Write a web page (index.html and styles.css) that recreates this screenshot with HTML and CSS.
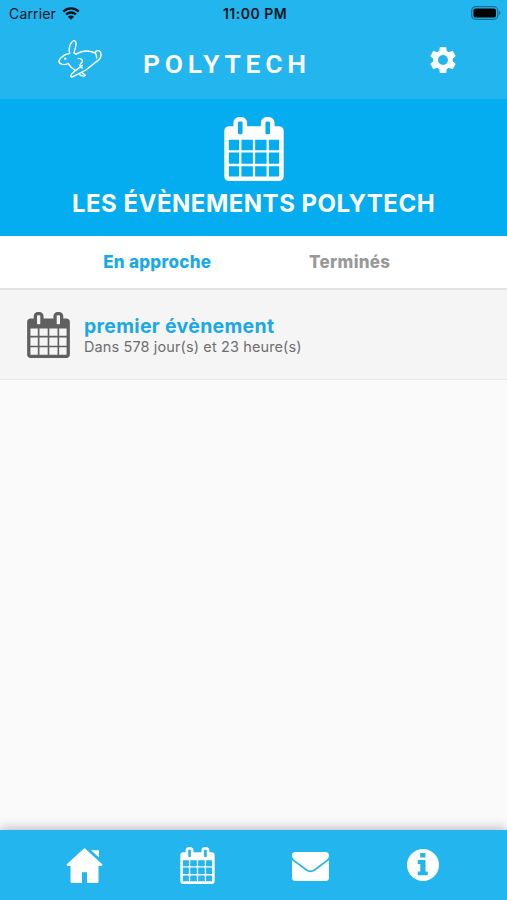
FILE: index.html
```html
<!DOCTYPE html>
<html lang="fr">
<head>
    <meta charset="UTF-8">
    <meta name="viewport" content="width=device-width, initial-scale=1.0">
    <title>Polytech</title>
    <link rel="stylesheet" href="styles.css">
</head>
<body>

<svg width="0" height="0" class="sprites">
    <symbol id="calendar" viewBox="64 0 1664 1792">
        <path d="M192 1664h288v-288h-288v288zm352 0h320v-288h-320v288zm-352-352h288v-320h-288v320zm352 0h320v-320h-320v320zm-352-384h288v-288h-288v288zm736 736h320v-288h-320v288zm-384-736h320v-288h-320v288zm768 736h288v-288h-288v288zm-384-352h320v-320h-320v320zm-352-864v-288q0-13-9.500-22.500t-22.500-9.500h-64q-13 0-22.500 9.500t-9.500 22.500v288q0 13 9.500 22.500t22.500 9.500h64q13 0 22.500-9.500t9.500-22.500zm736 864h288v-320h-288v320zm-384-384h320v-288h-320v288zm384 0h288v-288h-288v288zm32-480v-288q0-13-9.500-22.500t-22.500-9.500h-64q-13 0-22.500 9.500t-9.500 22.500v288q0 13 9.500 22.500t22.500 9.500h64q13 0 22.500-9.500t9.500-22.500zm384-64v1280q0 52-38 90t-90 38h-1408q-52 0-90-38t-38-90v-1280q0-52 38-90t90-38h128v-96q0-66 47-113t113-47h64q66 0 113 47t47 113v96h384v-96q0-66 47-113t113-47h64q66 0 113 47t47 113v96h128q52 0 90 38t38 90z"/>
    </symbol>
</svg>

<div class="app">
    <header class="header">
        <div class="status">
            <div class="carrier">
                <span>Carrier</span>
                <svg class="wifi" viewBox="0 0 18 13">
                    <path d="M1.300 4.600a11 11 0 0 1 15.400 0M4.100 7.500a7 7 0 0 1 9.800 0" fill="none" stroke="#06141b" stroke-width="2.300"/>
                    <path d="M9 12.800L5.900 9.700a4.400 4.400 0 0 1 6.200 0z"/>
                </svg>
            </div>
            <span class="time">11:00 PM</span>
            <div class="battery-box">
                <svg class="battery" viewBox="0 0 30 14">
                    <rect x="0.700" y="0.700" width="26" height="12.600" rx="3.800" fill="none" stroke="#166f94" stroke-width="1.200"/>
                    <rect x="2.400" y="2.400" width="22.600" height="9.200" rx="2.200" fill="#000"/>
                    <path d="M27.900 4.800q3 2.200 0 4.400z" fill="#166f94"/>
                </svg>
            </div>
        </div>
        <div class="nav">
            <svg class="rabbit" viewBox="0 0 132 114">
                <path d="M35 41C31 24 37 8 45 3c5-3 9 1 9 8 0 10-3 18-6 27l5 5c10-6 18-9 29-10 12-1 21 2 30 6 0-5 4-8 9-7 6 1 8 6 8 12 0 10-6 16-14 21L84 90l-39 20c-3 2-7 1-7-2 0-4 5-8 9-12 2-2 3-4 3-7-9-4-15-10-19-19-7 4-13 6-20 2C3 70 2 66 3 62c2-6 8-11 14-15 5-4 12-6 18-6z"/>
                <path d="M112 39c3 4 4 9 4 15M60 55c12 0 16 7 11 13-3 4-6 6-5 10 1 3 4 4 7 6M47 96l26-20M72 98l10 8c-4 4-11 2-17-2"/>
                <circle cx="22" cy="56" r="1.500"/>
            </svg>
            <h1 class="title">POLYTECH</h1>
            <svg class="gear" viewBox="2 2 20 20">
                <path d="M19.430 12.980c.04-.32.07-.64.07-.98s-.03-.66-.07-.98l2.110-1.650c.19-.15.24-.42.12-.64l-2-3.460c-.12-.22-.39-.3-.61-.22l-2.490 1c-.52-.4-1.080-.73-1.690-.98l-.38-2.650C14.460 2.180 14.250 2 14 2h-4c-.25 0-.46.18-.49.42l-.38 2.650c-.61.25-1.170.59-1.690.98l-2.490-1c-.23-.09-.49 0-.61.22l-2 3.460c-.13.22-.07.49.12.64l2.110 1.650c-.04.32-.07.65-.07.98s.03.66.07.98l-2.110 1.650c-.19.15-.24.42-.12.64l2 3.460c.12.22.39.3.61.22l2.490-1c.52.4 1.080.73 1.690.98l.38 2.650c.03.24.24.42.49.42h4c.25 0 .46-.18.49-.42l.38-2.650c.61-.25 1.170-.59 1.690-.98l2.490 1c.23.09.49 0 .61-.22l2-3.460c.12-.22.07-.49-.12-.64l-2.110-1.650zM12 15.800c-2.100 0-3.800-1.700-3.800-3.800s1.700-3.800 3.800-3.800 3.800 1.700 3.800 3.800-1.700 3.800-3.800 3.800z"/>
            </svg>
        </div>
    </header>

    <section class="banner">
        <svg class="banner-icon"><use href="#calendar"/></svg>
        <h2>LES ÉVÈNEMENTS POLYTECH</h2>
    </section>

    <div class="tabs">
        <span class="tab active">En approche</span>
        <span class="tab">Terminés</span>
    </div>

    <main class="list">
        <div class="event">
            <svg class="event-icon"><use href="#calendar"/></svg>
            <div class="event-text">
                <h3>premier évènement</h3>
                <p>Dans 578 jour(s) et 23 heure(s)</p>
            </div>
        </div>
    </main>

    <footer class="footer">
        <div class="item">
            <svg class="home" viewBox="0 0 36 35">
                <path d="M18 0L36 16.500q.2 1.300-1.500 1.500H32v15.500q0 1.500-1.500 1.500H20.500V24.300h-5V35H5.500Q4 35 4 33.500V18H1.500Q-.2 17.800 0 16.500z"/>
                <path d="M24.500 2.200H32.500V9.600z"/>
            </svg>
        </div>
        <div class="item">
            <svg class="cal"><use href="#calendar"/></svg>
        </div>
        <div class="item">
            <svg class="mail" viewBox="0 0 37 29">
                <path d="M3.500 0h30Q37 0 37 3.500q0 2.700-2.500 4.500L22 17.200q-3.500 2.800-7 0L2.500 8Q0 6.200 0 3.500 0 0 3.500 0z"/>
                <path d="M0 8.200L13.800 18.500q4.700 3.500 9.400 0L37 8.200v17.300q0 3.500-3.500 3.500h-30Q0 29 0 25.500z"/>
            </svg>
        </div>
        <div class="item">
            <svg class="info" viewBox="0 0 32 32">
                <circle cx="16" cy="16" r="16"/>
                <path d="M13.200 4h5.200v4.500h-5.200zM10.800 11h7.700v11.500h2.300v3.800H10.800v-3.800h2.500V15h-2.500z" fill="#22b5ee"/>
            </svg>
        </div>
    </footer>
</div>

</body>
</html>
```

FILE: styles.css
```css
body {
    font-family: Inter, "Liberation Sans", sans-serif;
    margin: 0;
    background: #fafafa;
}
h1, h2, h3, p {
    margin: 0;
}
svg {
    display: block;
    flex-shrink: 0;
}
.sprites {
    position: absolute;
}
.app {
    height: 100vh;
    display: flex;
    flex-direction: column;
    overflow: hidden;
}
.header {
    height: 99px;
    background: #22b5ee;
}
.status {
    height: 27px;
    padding: 0 6px 0 9px;
    display: grid;
    grid-template-columns: 1fr auto 1fr;
    align-items: center;
    color: #06141b;
    font-size: 14px;
}
.carrier {
    display: flex;
    align-items: center;
    gap: 6px;
    letter-spacing: 0.15px;
}
.wifi {
    width: 18px;
    height: 13px;
    margin-top: -1px;
    fill: #06141b;
}
.time {
    font-size: 14px;
    font-weight: 600;
    letter-spacing: 0.5px;
}
.battery-box {
    display: flex;
    justify-content: flex-end;
    margin-top: -1px;
}
.battery {
    width: 30px;
    height: 14px;
}
.nav {
    display: flex;
    align-items: flex-start;
    padding: 12px 51px 0 58px;
}
.rabbit {
    width: 44px;
    height: 38px;
    margin-top: 1px;
    fill: none;
    stroke: #fff;
    stroke-width: 4.2;
    stroke-linejoin: round;
    stroke-linecap: round;
}
.title {
    margin: 9px 0 0 41px;
    font-family: Roboto, sans-serif;
    font-size: 26.5px;
    line-height: 32px;
    font-weight: 600;
    letter-spacing: 4.7px;
    color: #fff;
}
.gear {
    width: 26px;
    height: 26px;
    margin: 8px 0 0 auto;
    fill: #fff;
}
.banner {
    height: 137px;
    background: #03adef;
    display: flex;
    flex-direction: column;
    align-items: center;
    color: #fff;
}
.banner-icon {
    width: 60px;
    height: 64px;
    margin-top: 18px;
    fill: #fff;
}
.banner h2 {
    margin-top: 8px;
    font-size: 24px;
    line-height: 30px;
    font-weight: 650;
    letter-spacing: 0.5px;
    white-space: nowrap;
}
.tabs {
    height: 52px;
    padding: 0 61px;
    display: grid;
    grid-template-columns: 1fr 1fr;
    align-items: center;
    justify-items: center;
    background: #fff;
    border-bottom: 2px solid #e2e2e2;
}
.tab {
    font-size: 17px;
    font-weight: 800;
    letter-spacing: 0.3px;
    color: #999;
}
.tab.active {
    color: #1aa9e4;
}
.list {
    flex: 1;
}
.event {
    height: 89px;
    padding-left: 27px;
    display: flex;
    align-items: center;
    gap: 14px;
    background: #f5f5f5;
    border-bottom: 1px solid #e6e6e6;
}
.event-icon {
    width: 43px;
    height: 46px;
    fill: #606060;
}
.event-text h3 {
    font-size: 19.5px;
    line-height: 23px;
    font-weight: 700;
    letter-spacing: 0.3px;
    color: #1aa9e4;
}
.event-text p {
    font-size: 14.5px;
    line-height: 17px;
    letter-spacing: 0.12px;
    color: #6e6e6e;
}
.footer {
    height: 70px;
    padding: 0 28px;
    display: grid;
    grid-template-columns: repeat(4, 1fr);
    align-items: center;
    justify-items: center;
    background: #22b5ee;
    box-shadow: 0 -2px 10px rgba(0, 0, 0, 0.25);
}
.item svg {
    fill: #fff;
}
.home {
    width: 37px;
    height: 35px;
}
.cal {
    width: 35px;
    height: 37px;
}
.mail {
    width: 37px;
    height: 29px;
    margin: 2px 0 0 2px;
}
.info {
    width: 32px;
    height: 32px;
}
```
